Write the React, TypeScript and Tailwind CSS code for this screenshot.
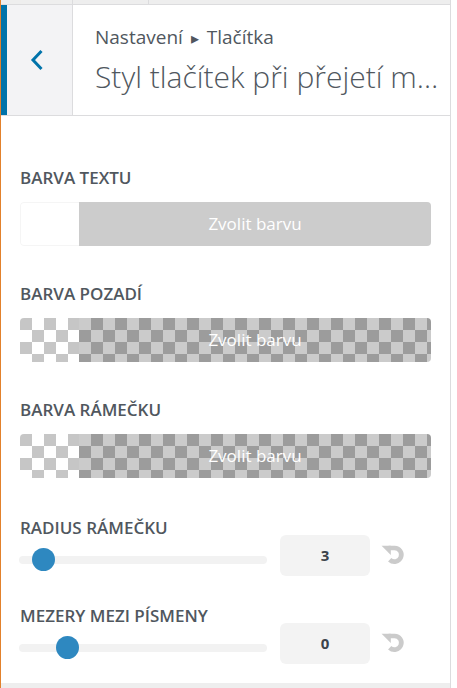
const font = { fontFamily: '"Open Sans", "Noto Sans", sans-serif' };

const ResetIcon = () => (
  <svg width="25" height="23" viewBox="0 0 23 21" className="text-[#cbcbcb]">
    <path d="M7 4.5 H12.5 A6.3 6.3 0 1 1 8 15.3" fill="none" stroke="currentColor" strokeWidth="4.3" />
    <path d="M0.5 2.35 L9 2.35 L9 11 Z" fill="currentColor" />
  </svg>
);

const ColorField = ({ label, checker, first }: { label: string; checker?: boolean; first?: boolean }) => (
  <div className={first ? "" : "mt-[37px]"}>
    <div className="text-[17px] font-semibold leading-[22px] text-[#50575e]">{label}</div>
    <div className="mt-[13px] flex h-[44px] overflow-hidden rounded-[4px]">
      {checker ? (
        <div className="w-[59px] bg-[repeating-conic-gradient(#ffffff_0%_25%,#c6c6c6_0%_50%)] bg-size-[24px_24px]" />
      ) : (
        <div className="w-[59px] rounded-l-[4px] border border-r-0 border-[#f5f5f5] bg-white" />
      )}
      <div
        className={
          checker
            ? "flex flex-1 items-center justify-center bg-[repeating-conic-gradient(#9c9c9c_0%_25%,#cbcbcb_0%_50%)] bg-size-[24px_24px] text-[17px] text-white"
            : "flex flex-1 items-center justify-center bg-[#cccccc] text-[17px] text-white"
        }
      >
        Zvolit barvu
      </div>
    </div>
  </div>
);

const RangeField = ({ label, value, pos, className }: { label: string; value: string; pos: number; className: string }) => (
  <div className={"flex items-end " + className}>
    <div className="flex w-[260px] flex-col pb-[5px]">
      <div className="text-[17px] font-semibold leading-[22px] text-[#50575e]">{label}</div>
      <div className="relative mt-[9px] flex h-[23px] w-[248px] -ml-px items-center">
        <div className="h-[8px] w-full rounded-full bg-[#f2f2f2]" />
        <div
          className="absolute top-0 h-[23px] w-[23px] rounded-full bg-[#2e88c0]"
          style={{ left: pos }}
        />
      </div>
    </div>
    <div className="flex items-center">
      <div className="flex h-[41px] w-[90px] items-center justify-center rounded-[6px] bg-[#f3f3f3] text-[15px] font-bold text-[#3c434a]">
        {value}
      </div>
      <div className="ml-[11px] mb-[2px]">
        <ResetIcon />
      </div>
    </div>
  </div>
);

export default function App() {
  return (
    <div className="flex h-[688px] w-[457px] bg-white" style={font}>
      <div className="flex h-full w-[451px] flex-col border-l border-r border-l-[#e2812c] border-r-[#dcdcde]">
        <div className="flex h-[5px] border-b border-[#dcdcde] bg-[#eeeeee]">
          <div className="w-[72px] border-r border-[#dcdcde]" />
          <div className="w-[76px] border-r border-[#dcdcde]" />
        </div>
        <div className="flex h-[111px] border-b border-[#dcdcde] bg-white">
          <div className="flex w-[72px] items-center justify-center border-l-[6px] border-r border-l-[#0073aa] border-r-[#dcdcde] bg-[#f3f3f5] pr-[5px]">
            <svg width="14" height="22" viewBox="0 0 14 22">
              <path d="M11.5 2 L3 11 L11.5 20" fill="none" stroke="#0073aa" strokeWidth="3" />
            </svg>
          </div>
          <div className="min-w-0 flex-1 pl-[22px] pr-[4px] pt-[20px] text-[#50575e]">
            <div className="text-[19px] leading-[25px]">
              Nastavení <span className="mx-[3px] text-[16px]">▸</span> Tlačítka
            </div>
            <div className="mt-[8px] truncate text-[30px] font-light leading-[36px]">
              Styl tlačítek při přejetí myší
            </div>
          </div>
        </div>
        <div className="flex-1 px-[19px] pt-[51px]">
          <ColorField label="BARVA TEXTU" first />
          <ColorField label="BARVA POZADÍ" checker />
          <ColorField label="BARVA RÁMEČKU" checker />
          <RangeField label="RADIUS RÁMEČKU" value="3" pos={13} className="mt-[39px]" />
          <RangeField label="MEZERY MEZI PÍSMENY" value="0" pos={37} className="mt-[29px]" />
        </div>
        <div className="h-[5px] bg-[#eeeeee]" />
      </div>
    </div>
  );
}
